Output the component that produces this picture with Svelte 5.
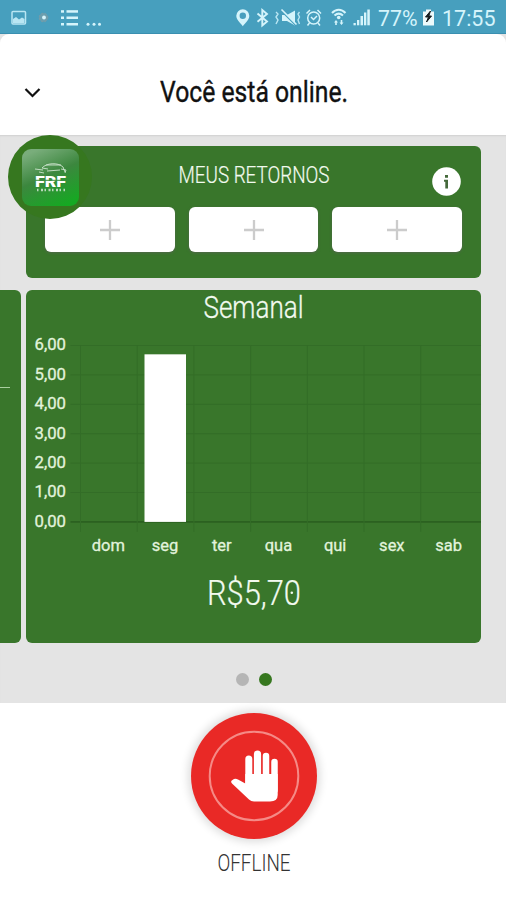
<script>
  const days = ['dom', 'seg', 'ter', 'qua', 'qui', 'sex', 'sab'];
  const earnings = [0, 5.7, 0, 0, 0, 0, 0];
  const ticks = [6, 5, 4, 3, 2, 1, 0];
  const slots = [1, 2, 3];

  const left = 54.5;
  const top = 55.5;
  const step = 56.7;
  const unit = 29.4;
  const base = top + unit * 6;

  let page = $state(1);
  let online = $state(true);
</script>

<div class="screen">
  <div class="status">
    <svg width="506" height="34" viewBox="0 0 506 34" fill="#d5f4fb">
      <rect x="12" y="11.500" width="13.500" height="12.500" rx="1" fill="none" stroke="#b9e6f3" stroke-width="1.500" />
      <path d="M13 23v-4l3-2 3 2.500 3-2 2.500 1.500v4z" fill="#b9e6f3" />
      <circle cx="43.500" cy="17.500" r="4.300" fill="#6c9eae" stroke="#7c9ca6" stroke-dasharray="2 1.500" />
      <circle cx="44" cy="17.500" r="1.900" />
      {#each [11.5, 17.8, 24.3] as y}
        <rect x="61" y={y - 1.3} width="3" height="2.500" />
        <rect x="66.500" y={y - 1.3} width="11.500" height="2.500" />
      {/each}
      <circle cx="88" cy="24.200" r="1.500" /><circle cx="94" cy="24.200" r="1.500" /><circle cx="99.500" cy="24.200" r="1.500" />
      <path fill-rule="evenodd" d="M242.800 9.300a6.500 6.500 0 0 0-6.500 6.500c0 4 3.500 6.500 6.500 10.500 3-4 6.500-6.500 6.500-10.500a6.500 6.500 0 0 0-6.500-6.500zm0 3.200a3.200 3.200 0 1 1 0 6.400 3.200 3.200 0 0 1 0-6.400z" />
      <path d="M257.500 13.500l9.500 8-4.700 4V10l4.700 4-9.500 7.800" fill="none" stroke="#d5f4fb" stroke-width="1.900" />
      <path d="M282 15h5l8-4.500v15L287 21h-5z" />
      <path d="M280.500 10l15 15" stroke="#479fbe" stroke-width="1.700" />
      <path d="M281.500 9.500l15 15" stroke="#d5f4fb" stroke-width="1.600" />
      <path d="M276 12l2 2-2 3 2 3-2 4M299.500 12l-1.500 2 1.500 3-1.500 3 1.500 4" fill="none" stroke="#b9e6f3" stroke-width="1.400" />
      <g fill="none" stroke="#d5f4fb" stroke-width="1.500">
        <circle cx="313.700" cy="18" r="6" />
        <path d="M306.500 13.500l3.500-3.500M317.500 10l3.500 3.500M309.500 23l-2 2.500M318 23l2 2.500M311 17l2.500 2.500 3.500-3.500" />
        <path d="M332 13c4-4.500 9.500-4.500 13.500 0M334.500 15.600c3-2.800 5.500-2.800 8.500 0" stroke-width="2" />
      </g>
      <circle cx="338.700" cy="17.500" r="1.800" />
      <path d="M334 22.500l2-2.500 2 2.500h-1.200V25h-1.600v-2.500zM339.500 22.500h1.200V20h1.600v2.500h1.200l-2 2.500z" />
      <rect x="353.500" y="23" width="2.300" height="2.300" /><rect x="357" y="20" width="2.300" height="5.300" />
      <rect x="360.500" y="16" width="2.500" height="9.300" /><rect x="364" y="12.500" width="2.300" height="12.800" />
      <rect x="367.300" y="9.500" width="2.500" height="15.800" />
      <text x="378" y="25.700" font-size="22.500" textLength="39.500" lengthAdjust="spacingAndGlyphs">77%</text>
      <path d="M423 11.500h3V9.500h5v2h3v14h-11z" fill="#eefafb" />
      <path d="M430.500 11l-5 6h3l-2 5 5-6h-2.700z" fill="#161d20" stroke="#161d20" stroke-width="1" />
      <text x="442" y="25.700" font-size="22.500" textLength="53.500" lengthAdjust="spacingAndGlyphs">17:55</text>
    </svg>
  </div>

  <header>
    <button class="back" aria-label="Voltar">
      <svg width="18" height="12" viewBox="0 0 18 12"><path d="M1.500 2l7 7 7-7" fill="none" stroke="#111" stroke-width="2.200" /></svg>
    </button>
    <svg class="title" width="240" height="44" viewBox="0 0 240 44">
      <text x="1" y="31" font-size="29.500" fill="#111" stroke="#111" stroke-width="0.400" textLength="188" lengthAdjust="spacingAndGlyphs">Você está online.</text>
    </svg>
  </header>

  <main>
    <section class="card returns">
      <div class="logo">
        <svg width="57" height="57" viewBox="0 0 57 57">
          <defs>
            <linearGradient id="logo-bg" x1="0.300" y1="0" x2="0.750" y2="1">
              <stop offset="0" stop-color="#79ad7b" />
              <stop offset="0.450" stop-color="#3c873e" />
              <stop offset="1" stop-color="#15a922" />
            </linearGradient>
          </defs>
          <rect width="57" height="57" rx="9" fill="url(#logo-bg)" />
          <path d="M13 20l8 1M17 23l5 1M20 19c4-5 16-6 21-1l2 5M20 19l6 1M24 16h15M39 20l5 1-1 3M25 22l13-1" fill="none" stroke="#cde3ce" stroke-width="0.900" />
          <text x="13" y="37.500" font-size="14" font-weight="900" fill="#fff" textLength="31" lengthAdjust="spacingAndGlyphs">FRF</text>
          <path d="M13 31.300h30" stroke="#3d8c3f" stroke-width="1" />
          <path d="M15 41h28" stroke="#b9dabb" stroke-width="2.300" stroke-dasharray="1.500 2.500 2 1.500" />
        </svg>
      </div>
      <svg class="heading" width="200" height="30" viewBox="0 0 200 30">
        <text x="24.500" y="20" font-size="23.500" font-weight="300" fill="#f2faef" stroke="#f2faef" stroke-width="0.200" textLength="151" lengthAdjust="spacingAndGlyphs">MEUS RETORNOS</text>
      </svg>
      <button class="info" aria-label="Informações">
        <svg width="29" height="29" viewBox="0 0 29 29">
          <circle cx="14.500" cy="14.500" r="14.300" fill="#fff" />
          <path d="M13 8h3v2.800h-3zM12 12.800h4v8.700h-2.700v-6.700H12z" fill="#45693b" />
        </svg>
      </button>
      <div class="slots">
        {#each slots as slot}
          <button class="slot" aria-label="Adicionar {slot}">
            <svg width="20" height="20" viewBox="0 0 20 20"><path d="M10 0v20M0 10h20" stroke="#ccc" stroke-width="2.300" /></svg>
          </button>
        {/each}
      </div>
    </section>

    <div class="carousel">
      <section class="card previous"><span></span></section>
      <section class="card weekly">
        <svg width="455" height="353" viewBox="0 0 455 353">
          <text x="177.500" y="27.500" font-size="30.500" font-weight="300" fill="#f2faef" stroke="#f2faef" stroke-width="0.300" textLength="100" lengthAdjust="spacingAndGlyphs">Semanal</text>
          {#each ticks as tick, i}
            <text x="8.500" y={top + i * unit + 4.8} class="label" textLength="31.500" lengthAdjust="spacingAndGlyphs">{tick},00</text>
            <line x1={left - 10} x2="455" y1={top + i * unit} y2={top + i * unit} stroke={tick === 0 ? '#2b6120' : '#336d27'} stroke-width={tick === 0 ? 1.6 : 1} />
          {/each}
          {#each days as day, i}
            <line x1={left + i * step} x2={left + i * step} y1={top} y2={base + 10} stroke="#336d27" />
            <text x={left + (i + 0.5) * step - 0.5} y="260.500" class="label" text-anchor="middle">{day}</text>
            {#if earnings[i] > 0}
              <rect x={left + i * step + 7.3} y={base - earnings[i] * unit} width="41.500" height={earnings[i] * unit} fill="#fff" />
            {/if}
          {/each}
          <text x="181" y="315" font-size="34.500" font-weight="300" fill="#f2faef" stroke="#f2faef" stroke-width="0.200" textLength="94" lengthAdjust="spacingAndGlyphs">R$5,70</text>
          <circle cx="265.800" cy="302.800" r="1.300" fill="#f2faef" />
        </svg>
      </section>
    </div>

    <div class="dots">
      {#each [0, 1] as n}
        <button class:active={page === n} aria-label="Página {n + 1}" onclick={() => (page = n)}></button>
      {/each}
    </div>
  </main>

  <footer>
    <button class="toggle" aria-label="Ficar offline" onclick={() => (online = !online)}>
      <svg width="126" height="126" viewBox="0 0 126 126">
        <circle cx="63" cy="63" r="44.300" fill="none" stroke="#f58a86" stroke-width="2" />
        <g fill="none" stroke="#fff" stroke-linecap="round">
          <path d="M57.800 46v27" stroke-width="7" />
          <path d="M66.500 41v28" stroke-width="7.200" />
          <path d="M75 43v28" stroke-width="6.500" />
          <path d="M83.500 49v28" stroke-width="6.500" />
        </g>
        <path d="M54.300 61H86.700V82Q86.700 88.500 79 88.500H63Q60 88.500 58 86.500L41 70.500Q39 68.500 41.500 67Q44 65 47 66.500L54.300 70.500Z" fill="#fff" />
      </svg>
    </button>
    <svg width="120" height="32" viewBox="0 0 120 32">
      <text x="23.500" y="22" font-size="24" font-weight="300" fill="#333" textLength="73" lengthAdjust="spacingAndGlyphs">OFFLINE</text>
    </svg>
  </footer>
</div>

<style>
  :global(body) {
    margin: 0;
  }
  .screen {
    width: 506px;
    height: 900px;
    overflow: hidden;
    background: #e4e4e4;
    font-family: Roboto, sans-serif;
    display: flex;
    flex-direction: column;
  }
  svg {
    display: block;
  }
  button {
    border: none;
    padding: 0;
    background: none;
    cursor: pointer;
  }
  .status {
    height: 34px;
    background: #479fbe;
    box-shadow: inset 0 -1px #3a8fb0;
  }
  header {
    height: 101px;
    box-sizing: border-box;
    padding: 17px 0 0 24px;
    background: #fff;
    border-radius: 9px 9px 0 0;
    display: flex;
    align-items: center;
  }
  .title {
    margin-left: 117px;
  }
  main {
    height: 568px;
    box-sizing: border-box;
    padding-top: 11px;
    box-shadow: inset 0 2px 2px -1px #d0d0d0;
  }
  .card {
    background: #39762b;
    border-radius: 6px;
    flex-shrink: 0;
  }
  .returns {
    position: relative;
    width: 455px;
    height: 132px;
    margin-left: 26px;
  }
  .logo {
    position: absolute;
    left: -18px;
    top: -11px;
    width: 84px;
    height: 84px;
    box-sizing: border-box;
    padding: 14px;
    border-radius: 50%;
    background: #36771f;
    z-index: 1;
  }
  .heading {
    margin: 0 auto;
    padding-top: 17px;
  }
  .info {
    position: absolute;
    right: 20px;
    top: 21px;
  }
  .slots {
    display: flex;
    gap: 14px;
    padding: 14px 19px 0;
  }
  .slot {
    flex: 1;
    height: 45px;
    background: #fff;
    border-radius: 6px;
    box-shadow: 0 1px 3px #52664c;
    display: flex;
    align-items: center;
    justify-content: center;
  }
  .carousel {
    display: flex;
    gap: 5px;
    margin-top: 12px;
  }
  .previous {
    width: 21px;
    height: 353px;
    border-radius: 0 6px 6px 0;
  }
  .previous span {
    display: block;
    width: 10px;
    height: 1px;
    margin-top: 97px;
    background: #a9cf9f;
  }
  .weekly {
    width: 455px;
    height: 353px;
  }
  .label {
    font-size: 16.5px;
    fill: #e2f3dd;
    stroke: #e2f3dd;
    stroke-width: 0.3px;
  }
  .dots {
    display: flex;
    justify-content: center;
    gap: 10px;
    margin-top: 30px;
    padding-left: 1px;
  }
  .dots button {
    width: 13px;
    height: 13px;
    border-radius: 50%;
    background: #b5b5b5;
  }
  .dots button.active {
    background: #36771f;
  }
  footer {
    flex: 1;
    background: #fff;
    padding: 10px 0 0 2px;
    display: flex;
    flex-direction: column;
    align-items: center;
    gap: 10px;
  }
  .toggle {
    width: 126px;
    height: 126px;
    border-radius: 50%;
    background: #e92926;
    box-shadow: 0 0 8px 3px #ddd;
  }
</style>
